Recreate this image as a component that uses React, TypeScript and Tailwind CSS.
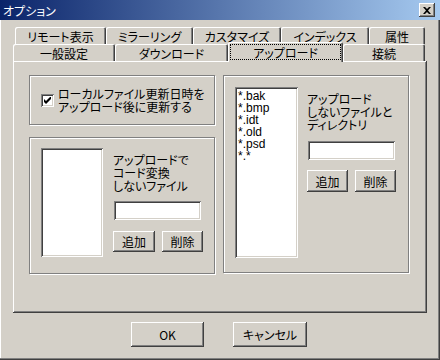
import React from "react";

const font = "font-['Noto_Sans_CJK_JP',sans-serif] [font-feature-settings:'palt'] text-[12px] leading-[13px] text-black";
const raised = "shadow-[inset_-1px_-1px_#404040,inset_1px_1px_#ffffff,inset_-2px_-2px_#808080]";
const sunken = "shadow-[inset_1px_1px_#808080,inset_-1px_-1px_#ffffff,inset_2px_2px_#404040,inset_-2px_-2px_#d4d0c8]";
const etched = "border border-[#808080] shadow-[inset_1px_1px_#ffffff,1px_1px_#ffffff]";

const row1: [string, number][] = [
    ["リモート表示", 91],
    ["ミラーリング", 87],
    ["カスタマイズ", 88],
    ["インデックス", 88],
    ["属性", 56],
];

const row2: [string, number][] = [
    ["一般設定", 102],
    ["ダウンロード", 113],
    ["アップロード", 115],
    ["接続", 82],
];

const skipList = ["*.bak", "*.bmp", "*.idt", "*.old", "*.psd", "*.*"];

const Tab = ({ label, width, selected }: { label: string; width: number; selected?: boolean }) => {
    if (selected) {
        return (
            <div
                style={{ width }}
                className="relative z-10 h-[20px] mb-[-1px] bg-[#d4d0c8] rounded-t-[2px] shadow-[inset_1px_1px_#ffffff,inset_-1px_0_#404040,inset_-2px_0_#808080] flex items-start pt-[2px] px-[2px]"
            >
                <div className="w-full h-[16px] border border-dotted border-black flex items-center justify-center">{label}</div>
            </div>
        );
    }
    return (
        <div
            style={{ width }}
            className="h-[17px] rounded-t-[2px] shadow-[inset_1px_1px_#ffffff,inset_-1px_0_#404040,inset_-2px_0_#808080] flex items-center justify-center pt-[1px]"
        >
            {label}
        </div>
    );
};

const Button = ({ label, className }: { label: string; className: string }) => (
    <div className={`${raised} ${className} flex items-center justify-center`}>{label}</div>
);

const App = () => {
    return (
        <div className={`${font} w-[440px] h-[360px] bg-[#d4d0c8] flex flex-col shadow-[inset_-1px_-1px_#404040,inset_-2px_-2px_#808080,inset_1px_0_#ffffff]`}>
            <div className="h-[20px] bg-[linear-gradient(to_right,#0a246a,#a6caf0)] flex items-center justify-between pl-[3px] pr-[5px]">
                <span className="text-white text-[12px]">オプション</span>
                <div className={`${raised} bg-[#d4d0c8] w-[16px] h-[14px] flex items-center justify-center`}>
                    <svg width="8" height="7" viewBox="0 0 8 7">
                        <path d="M0 0h2l2 2 2-2h2L5 3.5 8 7H6L4 5 2 7H0l3-3.5z" fill="#000" />
                    </svg>
                </div>
            </div>

            <div className="pl-[13px] pt-[7px]">
                <div className="flex pl-[2px]">
                    {row1.map(([l, w]) => (
                        <Tab key={l} label={l} width={w} />
                    ))}
                </div>
                <div className="flex items-end h-[17px]">
                    {row2.map(([l, w]) => (
                        <Tab key={l} label={l} width={w} selected={l === "アップロード"} />
                    ))}
                </div>

                <div className={`${raised} w-[414px] h-[252px] pt-[14px] pl-[16px] flex gap-[8px]`}>
                    <div className="flex flex-col gap-[12px] w-[186px]">
                        <div className={`${etched} h-[50px] flex items-center pl-[11px] gap-[4px]`}>
                            <div className={`${sunken} bg-white w-[13px] h-[13px] flex items-center justify-center shrink-0`}>
                                <svg width="7" height="7" viewBox="0 0 7 7">
                                    <path d="M0 2v3l2 2 5-5V-1L2 4z" fill="#000" />
                                </svg>
                            </div>
                            <div>
                                ローカルファイル更新日時を
                                <br />
                                アップロード後に更新する
                            </div>
                        </div>

                        <div className={`${etched} h-[137px] flex pl-[11px] pt-[10px] gap-[10px]`}>
                            <div className={`${sunken} bg-white w-[62px] h-[109px]`} />
                            <div className="flex flex-col pt-[5px]">
                                <div>
                                    アップロードで
                                    <br />
                                    コード変換
                                    <br />
                                    しないファイル
                                </div>
                                <div className={`${sunken} bg-white w-[87px] h-[19px] mt-[9px] ml-[1px]`} />
                                <div className="flex gap-[7px] mt-[11px]">
                                    <Button label="追加" className="w-[42px] h-[21px]" />
                                    <Button label="削除" className="w-[41px] h-[21px]" />
                                </div>
                            </div>
                        </div>
                    </div>

                    <div className={`${etched} w-[186px] h-[198px] flex pl-[11px] pt-[11px] gap-[9px]`}>
                        <div className={`${sunken} bg-white w-[63px] h-[171px] pl-[3px] pt-[3px] font-['Liberation_Sans',sans-serif] text-[12px] leading-[12px]`}>
                            {skipList.map((s) => (
                                <div key={s} className="h-[12px]">{s}</div>
                            ))}
                        </div>
                        <div className="flex flex-col pt-[5px]">
                            <div>
                                アップロード
                                <br />
                                しないファイルと
                                <br />
                                ディレクトリ
                            </div>
                            <div className={`${sunken} bg-white w-[87px] h-[19px] mt-[10px] ml-[1px]`} />
                            <div className="flex gap-[7px] mt-[10px]">
                                <Button label="追加" className="w-[41px] h-[22px]" />
                                <Button label="削除" className="w-[41px] h-[22px]" />
                            </div>
                        </div>
                    </div>
                </div>
            </div>

            <div className="flex pl-[131px] gap-[29px] mt-[9px]">
                <Button label="OK" className="w-[73px] h-[25px]" />
                <Button label="キャンセル" className="w-[74px] h-[25px]" />
            </div>
        </div>
    );
};

export default App;
